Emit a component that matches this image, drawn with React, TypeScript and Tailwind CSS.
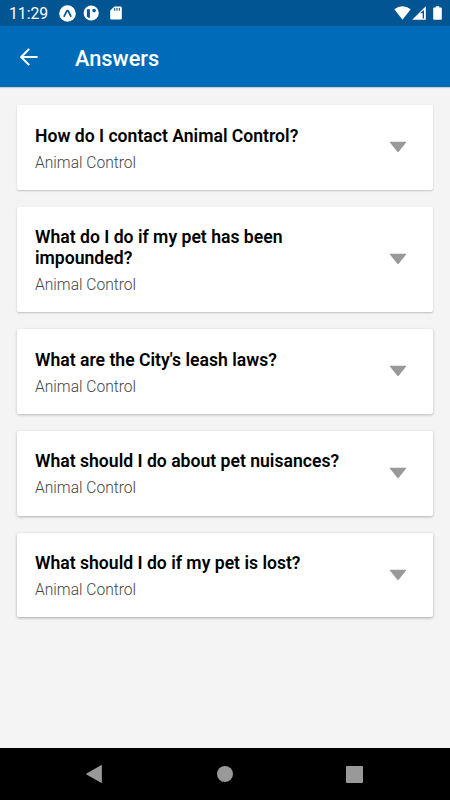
const ANSWERS = [
  { title: 'How do I contact Animal Control?', category: 'Animal Control', shadow: 'shadow-[0_1px_2px_rgba(0,0,0,0.2)]' },
  { title: 'What do I do if my pet has been impounded?', category: 'Animal Control', shadow: 'shadow-[0_1px_2px_rgba(0,0,0,0.23)]' },
  { title: "What are the City's leash laws?", category: 'Animal Control', shadow: 'shadow-[0_1px_3px_rgba(0,0,0,0.25)]' },
  { title: 'What should I do about pet nuisances?', category: 'Animal Control', shadow: 'shadow-[0_1px_3px_rgba(0,0,0,0.28)]' },
  { title: 'What should I do if my pet is lost?', category: 'Animal Control', shadow: 'shadow-[0_1px_3px_rgba(0,0,0,0.32)]' },
]

function StatusBar() {
  return (
    <div className="h-[26px] shrink-0 bg-[#005592] flex items-center pl-[9px] pr-2 text-white">
      <span className="w-[50px] text-[15.75px] leading-[26px] pt-[2px] whitespace-nowrap">11:29</span>
      <svg className="w-[17px] h-[17px]" viewBox="0 0 17 17">
        <circle cx="8.5" cy="8.5" r="8.3" fill="#fff" />
        <path d="M5.2 11.2 7.6 6.3q.9-1.5 1.8 0l2.4 4.9" fill="none" stroke="#005592" strokeWidth="1.7" strokeLinecap="round" />
      </svg>
      <svg className="w-[16px] h-[16px] ml-[7px]" viewBox="0 0 16 16">
        <circle cx="8.2" cy="8" r="7.6" fill="#fff" />
        <path d="M3.9 4.2h3v8.6H5.6L3.9 11.4z" fill="#005592" />
        <circle cx="11.1" cy="5.6" r="1.8" fill="#005592" />
      </svg>
      <svg className="w-[12px] h-[14px] ml-[11px]" viewBox="0 0 12 14">
        <path d="M4.4.5h6.2q1.2 0 1.2 1.2v10.6q0 1.2-1.2 1.2H1.4q-1.2 0-1.2-1.2V4.6z" fill="#fff" />
        <path d="M4.7 2v2.7M7 2v2.7M9.3 2v2.7" stroke="#005592" strokeWidth="1.1" />
      </svg>
      <svg className="w-[17px] h-[14px] ml-auto" viewBox="0 0 17 14">
        <path d="M.3 3.2Q8.5-2.8 16.7 3.2L8.5 13.7z" fill="#fff" />
      </svg>
      <svg className="w-[14px] h-[14px] ml-px" viewBox="0 0 14 14">
        <path d="M13.8.2v13.6H.2z" fill="#fff" />
        <path d="M8.8 6.6 12 3.9v8.5h-1.3V7.2H8.8z" fill="#005592" />
      </svg>
      <svg className="w-[9px] h-[14px] ml-[7px]" viewBox="0 0 9 14">
        <path d="M2.7.2h3.6v1.3H8q.8 0 .8.8V13q0 .8-.8.8H1q-.8 0-.8-.8V2.3q0-.8.8-.8h1.7z" fill="#fff" />
      </svg>
    </div>
  )
}

function AppBar() {
  return (
    <header className="h-[61px] shrink-0 bg-[#006bb8] flex items-center pl-5 text-white shadow-[0_1px_1px_rgba(0,0,0,0.15)]">
      <svg className="w-[18px] h-[18px]" viewBox="0 0 18 18" fill="none" stroke="#fff" strokeWidth="2">
        <path d="M17.6 9H1.8M9.2.9 1.2 9l8 8.1" />
      </svg>
      <h1 className="ml-[37px] pt-[4px] text-[21.75px] leading-7 font-medium">Answers</h1>
    </header>
  )
}

function AnswerCard({ title, category, shadow }: { title: string; category: string; shadow: string }) {
  return (
    <div className={`flex items-center bg-white rounded-[2px] pl-[18px] pr-[26px] pt-[20.5px] pb-[16.3px] ${shadow}`}>
      <div className="w-[320px]">
        <h2 className="text-[17.6px] leading-[20.5px] font-semibold text-black">{title}</h2>
        <p className="mt-[6.5px] text-[15.6px] leading-[21px] font-light text-[#444]">{category}</p>
      </div>
      <svg className="w-[18px] h-[12px] ml-auto mb-[5px]" viewBox="0 0 18 12">
        <path d="M1.2.8h15.6q.9 0 .3.8L9.7 10.8q-.7.8-1.4 0L.9 1.6Q.3.8 1.2.8z" fill="#999" />
      </svg>
    </div>
  )
}

function NavBar() {
  return (
    <nav className="h-[52px] shrink-0 bg-black flex items-center justify-between pl-[86px] pr-[87px]">
      <svg className="w-4 h-[18px]" viewBox="0 0 16 18">
        <path d="M15 .2q.9-.4.9.6v16.4q0 1-.9.6L.5 9.5Q-.2 9 .5 8.5z" fill="#999" />
      </svg>
      <span className="w-4 h-4 ml-px rounded-full bg-[#999]" />
      <span className="w-[17px] h-[17px] rounded-[1px] bg-[#999]" />
    </nav>
  )
}

export default function App() {
  return (
    <div className="w-[450px] h-[800px] flex flex-col overflow-hidden bg-[#f4f4f4] font-['Roboto',sans-serif]">
      <StatusBar />
      <AppBar />
      <main className="flex-1 min-h-0 flex flex-col gap-[17px] px-[17px] pt-[18px]">
        {ANSWERS.map(a => (
          <AnswerCard key={a.title} {...a} />
        ))}
      </main>
      <NavBar />
    </div>
  )
}
